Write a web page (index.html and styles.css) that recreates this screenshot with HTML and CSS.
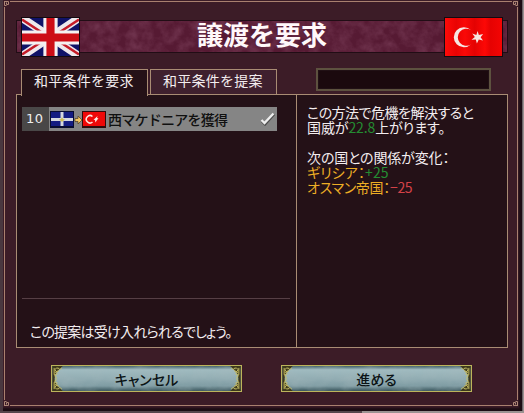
FILE: index.html
```html
<!DOCTYPE html>
<html lang="ja">
<head>
<meta charset="utf-8">
<title>譲渡を要求</title>
<link rel="stylesheet" href="styles.css">
</head>
<body>
<svg class="defs" width="0" height="0" aria-hidden="true">
  <defs>
    <filter id="velvet" x="0" y="0" width="100%" height="100%">
      <feTurbulence type="fractalNoise" baseFrequency="0.09" numOctaves="4" seed="7"/>
      <feColorMatrix values="0 0 0 0 .48  0 0 0 0 .2  0 0 0 0 .32  1.9 0 0 0 -.62"/>
    </filter>
    <filter id="stone" x="0" y="0" width="100%" height="100%">
      <feTurbulence type="fractalNoise" baseFrequency="0.05 0.09" numOctaves="4" seed="3"/>
      <feColorMatrix values="0 0 0 0 .38  0 0 0 0 .48  0 0 0 0 .5  1.6 0 0 0 -.6"/>
    </filter>
    <symbol id="curl" viewBox="0 0 12 26">
      <path d="M0 0H11L7 4L3 9Q2 13 3 17L7 22L11 26H0Z" fill="#3c381c"/>
      <path d="M10 2Q7 5 7 2.5Q4 1 3 3.500Q3 6 5 6Q7 6 6 4M2 2V9Q5 10 5 8Q5 6 3 7M2 10Q5 11 4 13Q5 15 2 16M2 24V17Q5 16 5 18Q5 20 3 19M10 24Q7 21 7 23.500Q4 25 3 22.500Q3 20 5 20Q7 20 6 22" fill="none" stroke="#c9c065"/>
    </symbol>
    <symbol id="knot" viewBox="0 0 6 6">
      <path d="M0 .5H4.500V3.500H2.500V1.500M.5 0V4.500H2.500" fill="none" stroke="#ad8776"/>
    </symbol>
  </defs>
</svg>
<main class="dialog">
  <div class="frame">
    <svg class="knot tl"><use href="#knot"/></svg>
    <svg class="knot tr"><use href="#knot"/></svg>
    <svg class="knot bl"><use href="#knot"/></svg>
    <svg class="knot br"><use href="#knot"/></svg>
    <header class="banner">
      <svg class="velvet"><rect width="100%" height="100%" filter="url(#velvet)"/></svg>
      <svg class="flag uk" viewBox="0 0 56 38" preserveAspectRatio="none">
        <rect width="56" height="38" fill="#101368"/>
        <path d="M0 0L56 38M56 0L0 38" stroke="#eee9ec" stroke-width="8"/>
        <path d="M0 1.500L21 15.500M0 36.500L22 22M56 1.500L35 15.500M56 36.500L35 22.500" stroke="#c51c28" stroke-width="2.500"/>
        <path d="M28 0V38M0 19.500H56" stroke="#f5f0f0" stroke-width="14"/>
        <path d="M28 0V38M0 19.500H56" stroke="#cd0d16" stroke-width="8"/>
      </svg>
      <h1>譲渡を要求</h1>
      <svg class="flag tk" viewBox="0 0 56 38" preserveAspectRatio="none">
        <defs><linearGradient id="silk"><stop offset="0" stop-color="#ff0b09"/><stop offset=".2" stop-color="#e90303"/><stop offset=".35" stop-color="#fa0907"/><stop offset=".52" stop-color="#e40202"/><stop offset=".7" stop-color="#fd0806"/><stop offset=".8" stop-color="#e60202"/><stop offset="1" stop-color="#f30504"/></linearGradient></defs>
        <rect width="56" height="38" fill="url(#silk)"/>
        <path d="M27 12A10 10 0 1 0 27 26.500A8.500 8.500 0 1 1 27 12Z" transform="translate(-1.500 0)" fill="#f6e6e1"/>
        <path d="M33 13L34.300 17L38.500 16L36 19.300L38.300 22.500L34.200 21.500L32.300 25.500L31.300 21.500L27 21.700L30.300 19L27.800 15.500L31.800 17Z" transform="translate(-1 0)" fill="#f6e6e1"/>
      </svg>
    </header>
    <nav class="tabs">
      <div class="tab active">和平条件を要求</div>
      <div class="tab">和平条件を提案</div>
      <div class="meter"></div>
    </nav>
    <section class="panel">
      <div class="terms">
        <div class="term">
          <span class="cost">10</span>
          <svg class="route" viewBox="0 0 58 18">
            <rect x="1" y="1" width="24" height="17" fill="#080c31"/>
            <rect x="2" y="2" width="22" height="14" fill="#141c82"/>
            <path d="M13 2V16M2 9.500H24" stroke="#d6d9df" stroke-width="3"/>
            <path d="M13 7L14 9L16 9.500L14 11L13 12L12 11L10 9.500L12 9Z" fill="#cdbb55"/>
            <path d="M26 8.500H29V6L33 10L29 14V11.500H26Z" fill="#f2c560" stroke="#4e3e22" stroke-width=".7"/>
            <rect x="33" y="1" width="24" height="17" fill="#310b0b"/>
            <rect x="34" y="2" width="22" height="14" fill="#ef0908"/>
            <path d="M43.500 6.500A3.700 3.700 0 1 0 43.500 12" fill="none" stroke="#ffe8e0" stroke-width="1.500"/>
            <path d="M48.500 6L48 8L49.500 8.500L48 10L46.500 12.500L46 10L44.500 9.500L46 8.500Z" fill="#fff0e8"/>
          </svg>
          <span class="term-name">西マケドニアを獲得</span>
          <svg class="check" viewBox="0 0 16 14"><path d="M2 9L5 12L14 2" fill="none" stroke="#4d4d4d" stroke-width="3"/><path d="M1.500 8L4.500 11L13.500 1.500" fill="none" stroke="#eee" stroke-width="2.400"/></svg>
        </div>
        <div class="verdict">この提案は受け入れられるでしょう。</div>
      </div>
      <div class="effects">
        <p class="l1">この方法で危機を解決すると</p>
        <p class="l2">国威が<b class="up">22.8</b>上がります。</p>
        <p class="gap"></p>
        <p class="l3">次の国との関係が変化：</p>
        <p class="l4 nation">ギリシア：<b class="up">+25</b></p>
        <p class="l5 nation">オスマン帝国：<b class="down">−25</b></p>
      </div>
    </section>
    <footer class="actions">
      <button class="cancel"><svg class="stone"><rect width="100%" height="100%" filter="url(#stone)"/></svg><svg class="curl"><use href="#curl"/></svg><svg class="curl end"><use href="#curl"/></svg><span>キャンセル</span></button>
      <button class="proceed"><svg class="stone"><rect width="100%" height="100%" filter="url(#stone)"/></svg><svg class="curl"><use href="#curl"/></svg><svg class="curl end"><use href="#curl"/></svg><span>進める</span></button>
    </footer>
  </div>
</main>
</body>
</html>
```
FILE: styles.css
```css
* { box-sizing: border-box; }
body {
  margin: 0;
  width: 524px;
  height: 413px;
  overflow: hidden;
  background: linear-gradient(90deg, #56454b 0 69%, #9a9291 69% 100%);
  font-family: "Noto Sans CJK JP", "Liberation Sans", sans-serif;
  font-size: 14px;
  color: #f3edef;
}
.defs { position: absolute; }
.dialog {
  width: 523px;
  height: 411px;
  padding: 1px 5px 5px 4px;
  border-right: 1px solid #6b6468;
  background: #3c1c27;
  box-shadow: inset 3px 0 #49373f, inset -3px -3px 2px #1c0d13;
}
.frame {
  position: relative;
  display: flex;
  flex-direction: column;
  width: 514px;
  height: 405px;
  padding: 18px 9px 0 11px;
  border: 1px solid #a9806f;
}
.knot { position: absolute; width: 6px; height: 6px; background: #3c1c27; }
.tl { left: -1px; top: -1px; }
.tr { right: -1px; top: -1px; transform: scaleX(-1); }
.bl { left: -1px; bottom: -1px; transform: scaleY(-1); }
.br { right: -1px; bottom: -1px; transform: scale(-1); }
.banner {
  position: relative;
  display: flex;
  align-items: center;
  justify-content: space-between;
  flex: none;
  height: 33px;
  padding: 0 5px;
  border: 1px solid #210d15;
  background: #561a33;
}
.velvet { position: absolute; inset: 0; width: 100%; height: 100%; opacity: .25; }
.flag {
  position: relative;
  flex: none;
  width: 59px;
  height: 40px;
  border: 1px solid #130a10;
}
.uk { margin-left: -1px; }
.tk { margin-right: -1px; }
h1 {
  position: relative;
  margin: 0 0 5px 0;
  font-size: 26px;
  line-height: 32px;
  font-weight: 700;
  color: #fff8fa;
}
.tabs {
  display: flex;
  flex: none;
  height: 26px;
  margin: 16px 0 0 5px;
}
.tab {
  position: relative;
  z-index: 1;
  width: 127px;
  height: 26px;
  margin-right: 2px;
  padding-left: 12px;
  border: 1px solid #a98c74;
  background: #3f202e;
  font-size: 14px;
  line-height: 21px;
  letter-spacing: .25px;
  white-space: nowrap;
}
.active { height: 27px; border-bottom: 0; background: #241117; }
.meter {
  width: 175px;
  height: 23px;
  margin: -1px 0 0 37px;
  border: 2px solid #5d513f;
  outline: 1px solid #211015;
  outline-offset: -3px;
  background: #1b090e;
}
.panel {
  display: flex;
  flex: none;
  height: 254px;
  margin-top: -1px;
  border: 1px solid #a98c74;
  background: #241117;
}
.terms {
  display: flex;
  flex-direction: column;
  width: 280px;
  padding: 12px 6px 0 5px;
  border-right: 1px solid #a98c74;
}
.term {
  display: flex;
  align-items: center;
  width: 255px;
  height: 24px;
  background: #858585;
  color: #101010;
}
.cost {
  width: 27px;
  height: 24px;
  padding-left: 4px;
  background: #494747;
  color: #eee;
  font: 13px/24px "DejaVu Sans", sans-serif;
  letter-spacing: .6px;
}
.route { flex: none; width: 58px; height: 18px; }
.term-name {
  width: 153px;
  padding-left: 1px;
  font-weight: 500;
  line-height: 22px;
  letter-spacing: -.75px;
  white-space: nowrap;
}
.check { flex: none; width: 16px; height: 14px; }
.verdict {
  margin-top: 167px;
  padding: 22px 0 0 8px;
  border-top: 1px solid #563f45;
  line-height: 20px;
  white-space: nowrap;
  font-feature-settings: "palt";
  letter-spacing: -.75px;
}
.effects { padding: 10px 0 0 10px; font-feature-settings: "palt"; }
.effects p { height: 15px; margin: 0; line-height: 15px; white-space: nowrap; }
.effects b { font-weight: 400; }
.effects .l1 { letter-spacing: -.5px; }
.effects .l2 { letter-spacing: -.1px; }
.effects .l3 { letter-spacing: -.15px; }
.effects .l4 { letter-spacing: .1px; }
.effects .l5 { letter-spacing: -.3px; }
.nation { color: #edae25; }
.effects .up { color: #248c32; }
.effects .down { color: #d44248; }
.actions {
  display: flex;
  gap: 39px;
  padding: 17px 0 0 35px;
}
button {
  position: relative;
  width: 191px;
  height: 27px;
  padding: 0;
  border: 1px solid #bcb45b;
  background: linear-gradient(#405f68, #a0bbc0 15%, #92adb3 50%, #7f9ca3 80%, #38545b);
  color: #0b1315;
  font: 500 14px/24px "Noto Sans CJK JP", sans-serif;
  font-feature-settings: "palt";
}
button span { position: relative; }
.stone { position: absolute; inset: 0; width: 100%; height: 100%; opacity: .45; }
.curl { position: absolute; left: 0; top: 0; width: 12px; height: 25px; }
.end { left: auto; right: 0; transform: scaleX(-1); }
```
